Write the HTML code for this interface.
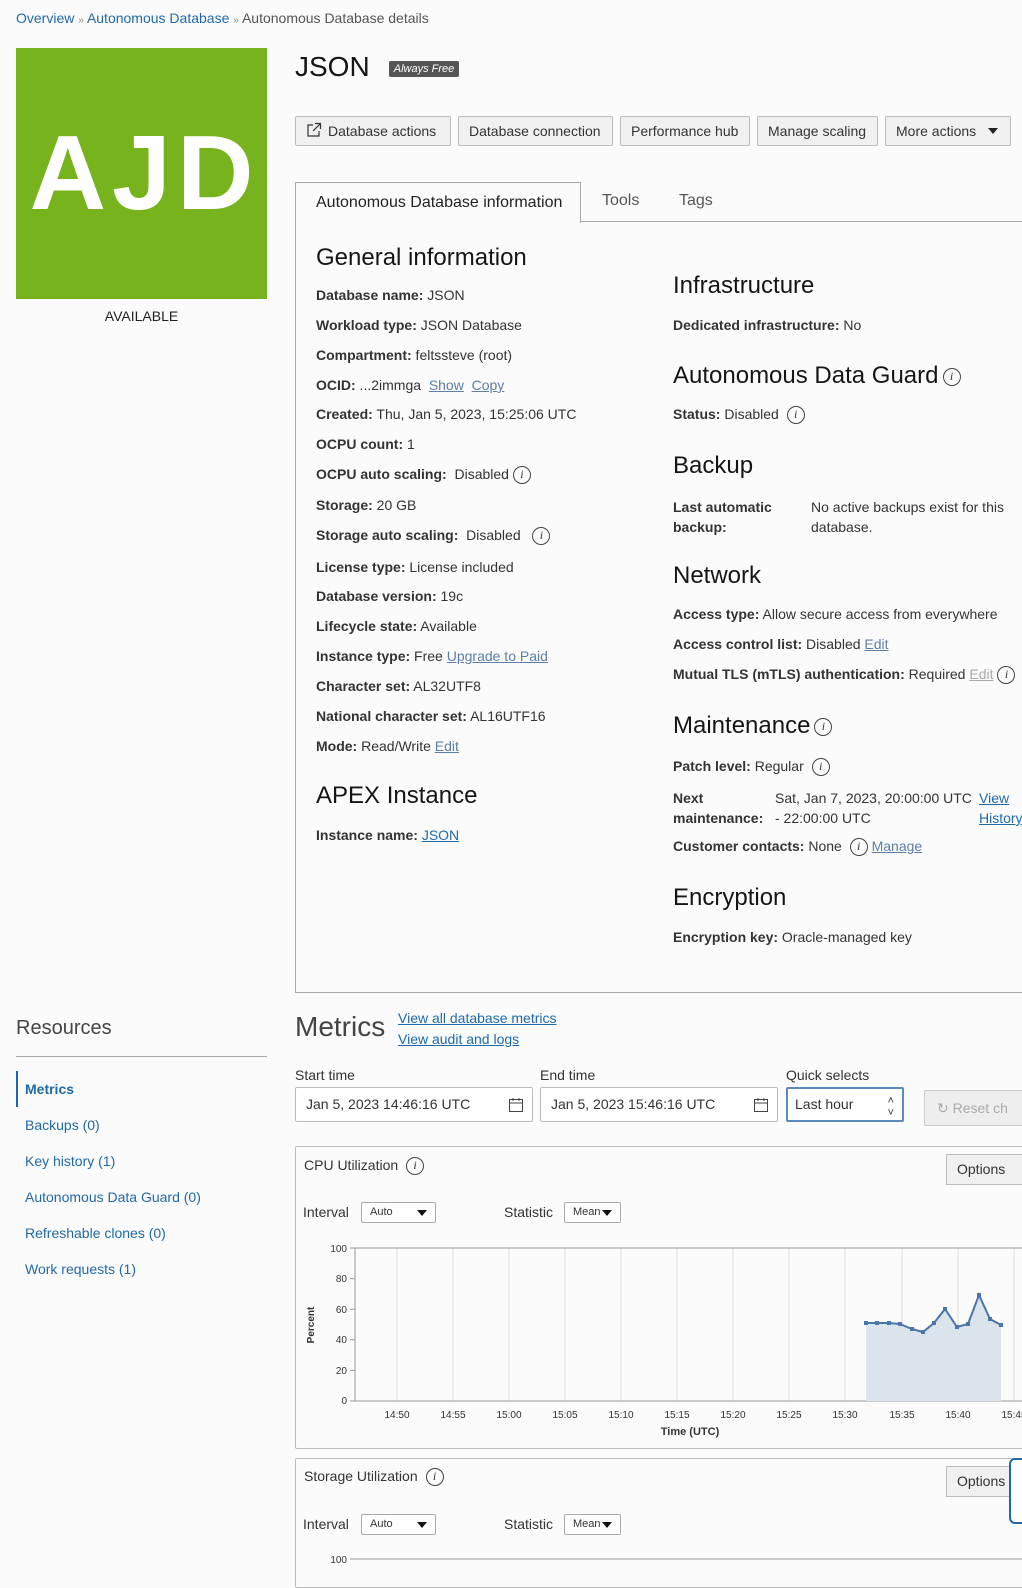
<!DOCTYPE html>
<html><head><meta charset="utf-8"><style>
*{margin:0;padding:0;box-sizing:border-box}
body{width:1022px;height:1575px;overflow:hidden;background:#fbfbfb;font-family:"Liberation Sans",sans-serif;color:#333;font-size:14px;position:relative}
.a{position:absolute;white-space:nowrap}
a,.lk{color:#1f69a9;text-decoration:none}
.u{text-decoration:underline;color:#5b7fa8}
b{color:#333;font-weight:bold}
.h{font-size:24px;color:#161513}
.btn{position:absolute;top:116px;height:30px;border:1px solid #bbb;border-radius:2px;background:#f0f0f0;font-size:14px;line-height:28px;padding:0 10px;color:#333}
.i{display:inline-block;width:18px;height:18px;border:1.3px solid #444;border-radius:50%;font:italic 12px "Liberation Serif",serif;text-align:center;line-height:15px;color:#333;vertical-align:middle;margin-left:4px}
.inp{position:absolute;top:1087px;height:35px;border:1px solid #bbb;border-radius:2px;background:#fff;line-height:33px;padding-left:10px;font-size:14px}
.sel{position:absolute;height:21px;border:1px solid #aaa;border-radius:2px;background:#fff;font-size:11px;line-height:19px;padding-left:8px}
.sel:after{content:"";position:absolute;right:8px;top:7px;border:5px solid transparent;border-top:6px solid #111;border-bottom:0}
.nav{position:absolute;left:25px;font-size:14px;color:#1f69a9}
</style></head><body>
<div class="a" style="left:16px;top:10px;font-size:14px"><a>Overview</a> <span style="color:#888;font-size:10px">»</span> <a>Autonomous Database</a> <span style="color:#888;font-size:10px">»</span> <span style="color:#555">Autonomous Database details</span></div>
<div class="a" style="left:16px;top:48px;width:251px;height:251px;background:#76b31c;color:#fff;font-weight:bold;font-size:106px;line-height:251px;text-align:center;letter-spacing:6px;text-indent:6px">AJD</div>
<div class="a" style="left:16px;top:308px;width:251px;text-align:center;font-size:14px;color:#222">AVAILABLE</div>

<div class="a" style="left:295px;top:51px;font-size:28px;color:#161513">JSON</div>
<div class="a" style="left:389px;top:61px;width:70px;height:16px;background:#555;color:#fff;font-size:11px;line-height:16px;text-align:center;font-style:italic;border-radius:2px">Always Free</div>

<div class="btn" style="left:295px;width:156px"><svg width="16" height="16" style="vertical-align:-2px;margin-right:6px" fill="none" stroke="#333" stroke-width="1.2"><path d="M7 3H2v11h11V9M9 1.5h5.5V7M14.5 1.5L7 9"/></svg>Database actions</div>
<div class="btn" style="left:458px;width:155px">Database connection</div>
<div class="btn" style="left:620px;width:130px">Performance hub</div>
<div class="btn" style="left:757px;width:121px">Manage scaling</div>
<div class="btn" style="left:885px;width:126px">More actions <span style="display:inline-block;margin-left:8px;border:5px solid transparent;border-top:6px solid #222;border-bottom:0;vertical-align:2px"></span></div>

<div class="a" style="left:295px;top:221px;width:727px;border-top:1px solid #aaa"></div>
<div class="a" style="left:295px;top:182px;width:286px;height:41px;border:1px solid #aaa;border-bottom:none;background:#fbfbfb;font-size:16px;line-height:40px;padding-left:20px;color:#222">Autonomous Database information</div>
<div class="a" style="left:602px;top:192px;font-size:16px;color:#555">Tools</div>
<div class="a" style="left:679px;top:192px;font-size:16px;color:#555">Tags</div>
<div class="a" style="left:295px;top:222px;width:727px;height:771px;border-left:1px solid #aaa;border-bottom:1px solid #aaa"></div>

<div class="a h" style="left:316px;top:244px">General information</div>
<div class="a" style="left:316px;top:287px"><b>Database name:</b> JSON</div>
<div class="a" style="left:316px;top:317px"><b>Workload type:</b> JSON Database</div>
<div class="a" style="left:316px;top:347px"><b>Compartment:</b> feltssteve (root)</div>
<div class="a" style="left:316px;top:377px"><b>OCID:</b> ...2immga &nbsp;<span class="u">Show</span> &nbsp;<span class="u">Copy</span></div>
<div class="a" style="left:316px;top:406px"><b>Created:</b> Thu, Jan 5, 2023, 15:25:06 UTC</div>
<div class="a" style="left:316px;top:436px"><b>OCPU count:</b> 1</div>
<div class="a" style="left:316px;top:466px"><b>OCPU auto scaling:</b>&nbsp; Disabled<span class="i">i</span></div>
<div class="a" style="left:316px;top:497px"><b>Storage:</b> 20 GB</div>
<div class="a" style="left:316px;top:527px"><b>Storage auto scaling:</b>&nbsp; Disabled &nbsp;<span class="i">i</span></div>
<div class="a" style="left:316px;top:559px"><b>License type:</b> License included</div>
<div class="a" style="left:316px;top:588px"><b>Database version:</b> 19c</div>
<div class="a" style="left:316px;top:618px"><b>Lifecycle state:</b> Available</div>
<div class="a" style="left:316px;top:648px"><b>Instance type:</b> Free <span class="u">Upgrade to Paid</span></div>
<div class="a" style="left:316px;top:678px"><b>Character set:</b> AL32UTF8</div>
<div class="a" style="left:316px;top:708px"><b>National character set:</b> AL16UTF16</div>
<div class="a" style="left:316px;top:738px"><b>Mode:</b> Read/Write <span class="u">Edit</span></div>
<div class="a h" style="left:316px;top:782px">APEX Instance</div>
<div class="a" style="left:316px;top:827px"><b>Instance name:</b> <span class="u" style="color:#1f69a9">JSON</span></div>

<div class="a h" style="left:673px;top:272px">Infrastructure</div>
<div class="a" style="left:673px;top:317px"><b>Dedicated infrastructure:</b> No</div>
<div class="a h" style="left:673px;top:362px">Autonomous Data Guard<span class="i">i</span></div>
<div class="a" style="left:673px;top:406px"><b>Status:</b> Disabled <span class="i">i</span></div>
<div class="a h" style="left:673px;top:452px">Backup</div>
<div class="a" style="left:673px;top:497px;line-height:20px"><b>Last automatic<br>backup:</b></div>
<div class="a" style="left:811px;top:497px;line-height:20px">No active backups exist for this<br>database.</div>
<div class="a h" style="left:673px;top:562px">Network</div>
<div class="a" style="left:673px;top:606px"><b>Access type:</b> Allow secure access from everywhere</div>
<div class="a" style="left:673px;top:636px"><b>Access control list:</b> Disabled <span class="u">Edit</span></div>
<div class="a" style="left:673px;top:666px"><b>Mutual TLS (mTLS) authentication:</b> Required <span class="u" style="color:#aaa">Edit</span><span class="i">i</span></div>
<div class="a h" style="left:673px;top:712px">Maintenance<span class="i">i</span></div>
<div class="a" style="left:673px;top:758px"><b>Patch level:</b> Regular <span class="i">i</span></div>
<div class="a" style="left:673px;top:788px;line-height:20px"><b>Next<br>maintenance:</b></div>
<div class="a" style="left:775px;top:788px;line-height:20px">Sat, Jan 7, 2023, 20:00:00 UTC<br>- 22:00:00 UTC</div>
<div class="a" style="left:979px;top:788px;line-height:20px"><span class="u" style="color:#1f69a9">View</span><br><span class="u" style="color:#1f69a9">History</span></div>
<div class="a" style="left:673px;top:838px"><b>Customer contacts:</b> None <span class="i">i</span> <span class="u">Manage</span></div>
<div class="a h" style="left:673px;top:884px">Encryption</div>
<div class="a" style="left:673px;top:929px"><b>Encryption key:</b> Oracle-managed key</div>

<div class="a" style="left:16px;top:1017px;font-size:20px;color:#444">Resources</div>
<div class="a" style="left:16px;top:1056px;width:251px;border-top:1px solid #aaa"></div>
<div class="a" style="left:16px;top:1071px;height:36px;border-left:2px solid #1f69a9"></div>
<div class="nav" style="top:1081px;font-weight:bold">Metrics</div>
<div class="nav" style="top:1117px">Backups (0)</div>
<div class="nav" style="top:1153px">Key history (1)</div>
<div class="nav" style="top:1189px">Autonomous Data Guard (0)</div>
<div class="nav" style="top:1225px">Refreshable clones (0)</div>
<div class="nav" style="top:1261px">Work requests (1)</div>

<div class="a" style="left:295px;top:1011px;font-size:28px;color:#444">Metrics</div>
<div class="a" style="left:398px;top:1008px;line-height:21px"><span class="u" style="color:#1f69a9">View all database metrics</span><br><span class="u" style="color:#1f69a9">View audit and logs</span></div>
<div class="a" style="left:295px;top:1067px">Start time</div>
<div class="a" style="left:540px;top:1067px">End time</div>
<div class="a" style="left:786px;top:1067px">Quick selects</div>
<div class="inp" style="left:295px;width:238px">Jan 5, 2023 14:46:16 UTC<svg class="a" style="right:8px;top:9px" width="16" height="16" fill="none" stroke="#444"><rect x="1.5" y="2.5" width="13" height="12"/><path d="M1.5 6h13M5 1v3M11 1v3"/></svg></div>
<div class="inp" style="left:540px;width:238px">Jan 5, 2023 15:46:16 UTC<svg class="a" style="right:8px;top:9px" width="16" height="16" fill="none" stroke="#444"><rect x="1.5" y="2.5" width="13" height="12"/><path d="M1.5 6h13M5 1v3M11 1v3"/></svg></div>
<div class="inp" style="left:786px;width:118px;border:2px solid #5b8ac0;line-height:31px;padding-left:7px">Last hour<span class="a" style="right:8px;top:0;font-size:11px;line-height:12px;top:6px;text-align:center">&#708;<br>&#709;</span></div>
<div class="a" style="left:924px;top:1090px;width:110px;height:36px;border:1px solid #ccc;border-radius:2px;background:#eee;color:#aaa;line-height:34px;padding-left:12px">&#8635; Reset ch</div>

<div class="a" style="left:295px;top:1146px;width:740px;height:303px;border:1px solid #bbb;border-radius:2px"></div>
<div class="a" style="left:304px;top:1157px">CPU Utilization <span class="i">i</span></div>
<div class="a" style="left:946px;top:1154px;width:90px;height:31px;border:1px solid #bbb;background:#f0f0f0;line-height:29px;padding-left:10px">Options</div>
<div class="a" style="left:303px;top:1204px">Interval</div>
<div class="sel" style="left:361px;top:1202px;width:75px">Auto</div>
<div class="a" style="left:504px;top:1204px">Statistic</div>
<div class="sel" style="left:564px;top:1202px;width:57px">Mean</div>

<div class="a" style="left:295px;top:1458px;width:740px;height:130px;border:1px solid #bbb;border-radius:2px"></div>
<div class="a" style="left:304px;top:1468px">Storage Utilization <span class="i">i</span></div>
<div class="a" style="left:946px;top:1466px;width:90px;height:31px;border:1px solid #bbb;background:#f0f0f0;line-height:29px;padding-left:10px">Options</div>
<div class="a" style="left:1009px;top:1458px;width:20px;height:66px;border:2px solid #1f69a9;border-radius:6px;background:#fff"></div>
<div class="a" style="left:303px;top:1516px">Interval</div>
<div class="sel" style="left:361px;top:1514px;width:75px">Auto</div>
<div class="a" style="left:504px;top:1516px">Statistic</div>
<div class="sel" style="left:564px;top:1514px;width:57px">Mean</div>

<svg class="a" style="left:295px;top:1235px" width="727" height="340" font-family="Liberation Sans,sans-serif" font-size="10" fill="#333">
<g stroke="#ddd" stroke-width="1">
<path d="M102 13V166M158 13V166M214 13V166M270 13V166M326 13V166M382 13V166M438 13V166M494 13V166M550 13V166M607 13V166M663 13V166M719 13V166"/>
</g>
<path d="M60 13H727M60 13V166H727" fill="none" stroke="#999"/>
<path d="M55 13h5M55 43.6h5M55 74.2h5M55 104.8h5M55 135.4h5M55 166h5" stroke="#999"/>
<g text-anchor="end"><text x="52" y="17">100</text><text x="52" y="47">80</text><text x="52" y="78">60</text><text x="52" y="108">40</text><text x="52" y="139">20</text><text x="52" y="169">0</text></g>
<text transform="translate(19,90) rotate(-90)" text-anchor="middle" font-weight="bold" font-size="10">Percent</text>
<g text-anchor="middle"><text x="102" y="183">14:50</text><text x="158" y="183">14:55</text><text x="214" y="183">15:00</text><text x="270" y="183">15:05</text><text x="326" y="183">15:10</text><text x="382" y="183">15:15</text><text x="438" y="183">15:20</text><text x="494" y="183">15:25</text><text x="550" y="183">15:30</text><text x="607" y="183">15:35</text><text x="663" y="183">15:40</text><text x="719" y="183">15:45</text></g>
<text x="395" y="200" text-anchor="middle" font-weight="bold" font-size="11">Time (UTC)</text>
<path d="M571 166V88L582 88L594 88L605 89L617 94L628 97L639 88L650 74L662 92L673 89L684 60L695 84L706 90V166Z" fill="#dbe3ec"/>
<path d="M571 88L582 88L594 88L605 89L617 94L628 97L639 88L650 74L662 92L673 89L684 60L695 84L706 90" fill="none" stroke="#4a76a8" stroke-width="2"/>
<g fill="#4a76a8"><rect x="569" y="86" width="4" height="4"/><rect x="580" y="86" width="4" height="4"/><rect x="592" y="86" width="4" height="4"/><rect x="603" y="87" width="4" height="4"/><rect x="615" y="92" width="4" height="4"/><rect x="626" y="95" width="4" height="4"/><rect x="637" y="86" width="4" height="4"/><rect x="648" y="72" width="4" height="4"/><rect x="660" y="90" width="4" height="4"/><rect x="671" y="87" width="4" height="4"/><rect x="682" y="58" width="4" height="4"/><rect x="693" y="82" width="4" height="4"/><rect x="704" y="88" width="4" height="4"/></g>
<text x="52" y="328" text-anchor="end">100</text>
<path d="M55 324h5M60 324H727" stroke="#999"/>
</svg>
</body></html>
